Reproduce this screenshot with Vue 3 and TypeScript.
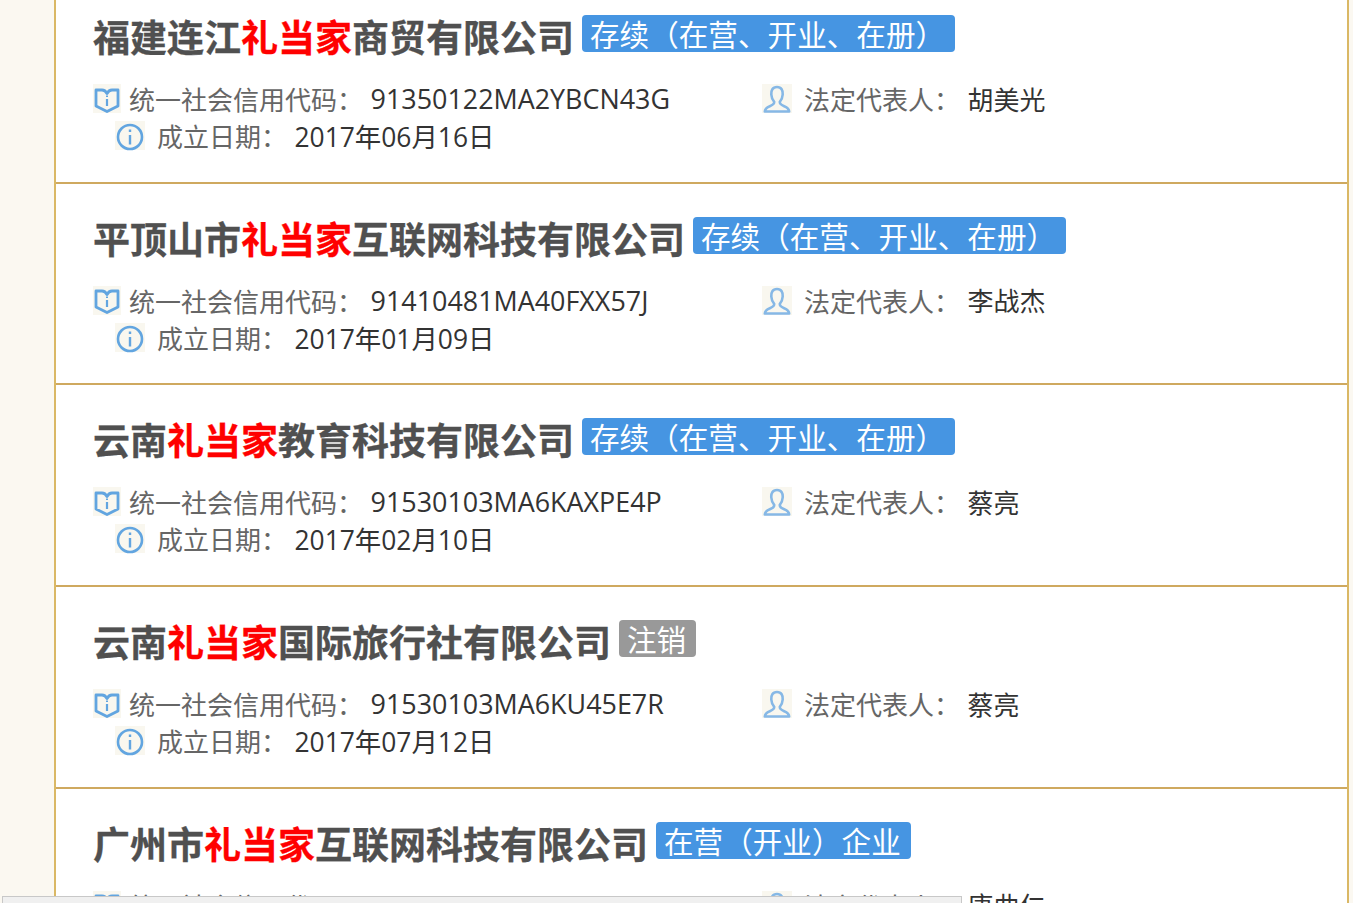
<script setup lang="ts">
interface Company {
  prefix: string
  suffix: string
  status: string
  cancelled?: boolean
  code: string
  person: string
  date: string
}

const keyword = '礼当家'

const companies: Company[] = [
  { prefix: '福建连江', suffix: '商贸有限公司', status: '存续（在营、开业、在册）', code: '91350122MA2YBCN43G', person: '胡美光', date: '2017年06月16日' },
  { prefix: '平顶山市', suffix: '互联网科技有限公司', status: '存续（在营、开业、在册）', code: '91410481MA40FXX57J', person: '李战杰', date: '2017年01月09日' },
  { prefix: '云南', suffix: '教育科技有限公司', status: '存续（在营、开业、在册）', code: '91530103MA6KAXPE4P', person: '蔡亮', date: '2017年02月10日' },
  { prefix: '云南', suffix: '国际旅行社有限公司', status: '注销', cancelled: true, code: '91530103MA6KU45E7R', person: '蔡亮', date: '2017年07月12日' },
  { prefix: '广州市', suffix: '互联网科技有限公司', status: '在营（开业）企业', code: '91440101MA59K2LT3D', person: '唐曲仁', date: '2017年03月21日' },
]
</script>

<template>
  <div class="page">
    <ul class="list">
      <li v-for="c in companies" :key="c.code" class="row">
        <div class="title-line">
          <h3 class="name">{{ c.prefix }}<em>{{ keyword }}</em>{{ c.suffix }}</h3>
          <span class="status" :class="{ cancelled: c.cancelled }">{{ c.status }}</span>
        </div>
        <div class="info-line">
          <div class="info code">
            <span class="icon book">
              <svg width="26" height="27" viewBox="0 0 26 27" fill="none">
                <path d="M2 4 L2 20 L13 25.5 L24 20 L24 4 L18 4 C16 4 14 5.5 13 7.5 C12 5.5 10 4 8 4 Z" stroke="#62a5e0" stroke-width="2.8" stroke-linejoin="round" />
                <path d="M13 13 V20" stroke="#62a5e0" stroke-width="2.2" />
                <path d="M13 9.5 V11" stroke="#62a5e0" stroke-width="2" />
              </svg>
            </span>
            <span class="label">统一社会信用代码：</span>
            <span class="value wide">{{ c.code }}</span>
          </div>
          <div class="info">
            <span class="icon person">
              <svg width="28" height="28" viewBox="0 0 28 28" fill="none">
                <path d="M14 2 C9.5 2 8 5.5 8.3 9.5 C8.5 12.5 9.5 15 11.2 16.8 C11.5 19 9.8 20 6.8 21.2 C4 22.3 2 23.6 1.8 26.5 L26.2 26.5 C26 23.6 24 22.3 21.2 21.2 C18.2 20 16.5 19 16.8 16.8 C18.5 15 19.5 12.5 19.7 9.5 C20 5.5 18.5 2 14 2 Z" stroke="#86b8e6" stroke-width="2.6" stroke-linejoin="round" />
              </svg>
            </span>
            <span class="label">法定代表人：</span>
            <span class="value">{{ c.person }}</span>
          </div>
        </div>
        <div class="info-line second">
          <div class="info">
            <span class="icon circle">
              <svg width="28" height="28" viewBox="0 0 28 28" fill="none">
                <circle cx="14" cy="14" r="12" stroke="#62a5e0" stroke-width="2.6" />
                <path d="M14 12 V21.5" stroke="#62a5e0" stroke-width="2.4" />
                <path d="M14 6.5 V9" stroke="#62a5e0" stroke-width="2.4" />
              </svg>
            </span>
            <span class="label">成立日期：</span>
            <span class="value date">{{ c.date }}</span>
          </div>
        </div>
      </li>
    </ul>
    <div class="status-bar"></div>
  </div>
</template>

<style>
html,
body {
  margin: 0;
  height: 100%;
  overflow: hidden;
}
</style>

<style scoped>
.page {
  position: relative;
  height: 903px;
  overflow: hidden;
  background: #fbf8f1;
  font-family: "Noto Sans CJK SC", "Open Sans", sans-serif;
}

.list {
  list-style: none;
  margin: -18px 0 0 54px;
  padding: 0;
  width: 1295px;
  box-sizing: border-box;
  border-left: 2px solid #dab865;
  border-right: 2px solid #dab865;
  background: #fff;
}

.row {
  box-sizing: border-box;
  height: 201.7px;
  padding: 30px 0 0 37px;
  border-bottom: 2px solid #cfa95f;
}

.title-line {
  display: flex;
  align-items: flex-start;
  height: 48px;
}

.name {
  margin: 0;
  font-size: 37px;
  line-height: 48px;
  font-weight: 700;
  color: #505050;
  white-space: nowrap;
  -webkit-text-stroke: 0.3px currentColor;
}

.name em {
  font-style: normal;
  color: #f00;
}

.status {
  margin: 3px 0 0 8px;
  padding: 0 10px 0 8px;
  height: 37px;
  line-height: 37px;
  font-size: 29.6px;
  color: #fff;
  background: #4695e2;
  border-radius: 4px;
  white-space: nowrap;
}

.status.cancelled {
  background: #999;
}

.info-line {
  display: flex;
  margin-top: 20px;
  height: 37px;
  align-items: center;
}

.info-line.second {
  margin-top: 0;
  padding-left: 22px;
}

.info {
  display: flex;
  align-items: center;
  font-size: 26px;
  white-space: nowrap;
}

.info.code {
  width: 669px;
}

.icon {
  display: flex;
  align-items: center;
  justify-content: center;
  width: 28px;
  height: 29px;
  margin-right: 8px;
  background: #f9f7ef;
}

.icon svg {
  margin-top: 1px;
  filter: blur(0.4px);
}

.icon.circle {
  width: 30px;
  margin-right: 12px;
}

.icon.circle svg {
  margin-top: 3px;
}

.icon.person {
  width: 30px;
  margin-right: 12px;
}

.label {
  color: #666;
}

.value {
  color: #333;
  margin-left: 7.5px;
  font-family: "Open Sans", "Noto Sans CJK SC", sans-serif;
}

.value.wide {
  font-size: 26.9px;
}

.value.date {
  font-size: 26.4px;
}

.status-bar {
  position: absolute;
  left: 2px;
  bottom: -3px;
  width: 958px;
  height: 8px;
  background: #f0f0f0;
  border: 1px solid #c8c8c8;
}
</style>
